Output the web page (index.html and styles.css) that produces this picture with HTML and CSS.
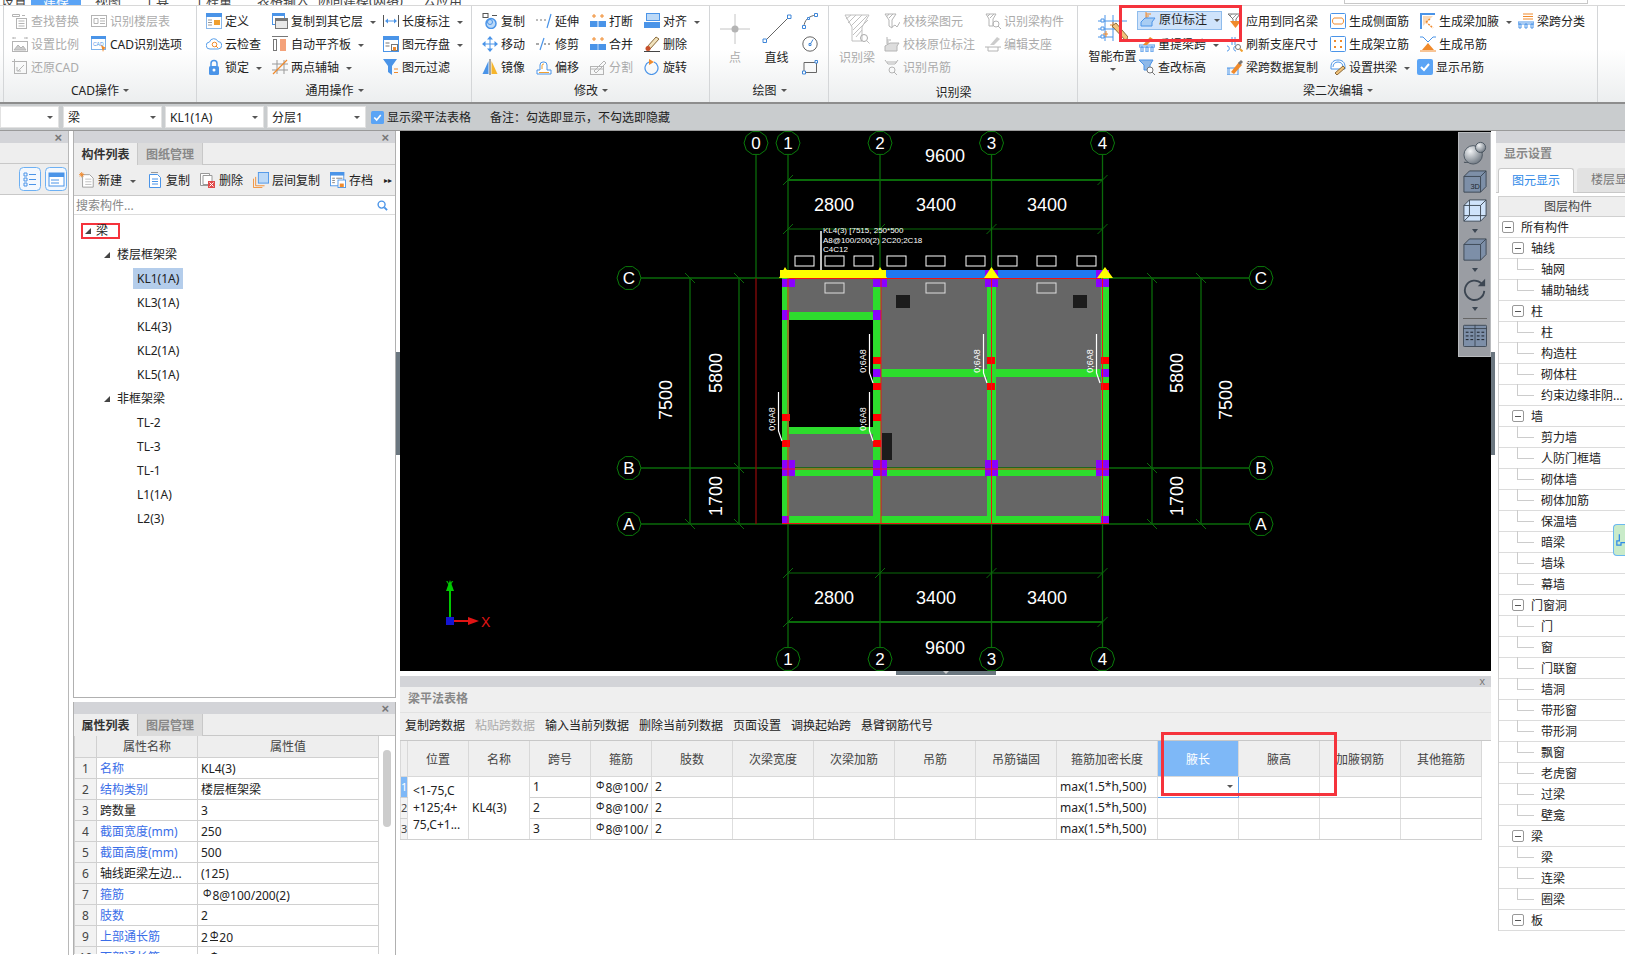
FILE: index.html
```html
<!DOCTYPE html>
<html lang="zh-CN">
<head>
    <meta charset="UTF-8">
    <meta name="viewport" content="width=device-width, initial-scale=1.0">
    <title>梁二次编辑</title>
    <link rel="stylesheet" href="styles.css">
</head>
<body>
    <!-- icon sprite -->
    <svg class="sprite" xmlns="http://www.w3.org/2000/svg">
        <defs>
            <radialGradient id="ball" cx="35%" cy="30%" r="75%"><stop offset="0" stop-color="#f2f4f6"/><stop offset="1" stop-color="#6d7680"/></radialGradient>
        </defs>
        <symbol id="i-find" viewBox="0 0 16 16"><g fill="none" stroke="#b4b4b4"><path d="M.5 1.5h7v2h-7zM10 2.500h3"/><rect x="4.500" y="5.500" width="10" height="10"/><path d="M6.500 8h6M6.500 10.500h6M6.500 13h6"/></g></symbol>
        <symbol id="i-sheet" viewBox="0 0 16 16"><g fill="none" stroke="#b4b4b4"><rect x=".5" y="2.500" width="15" height="11"/><path d="M3 5.500h4v5H3zM9 5.500h5M9 8h5M9 10.500h5"/></g></symbol>
        <symbol id="i-scale" viewBox="0 0 16 16"><g fill="none" stroke="#b4b4b4"><path d="M1 1v2M1 2h3M15 1v2M15 2h-3"/><rect x=".5" y="5.500" width="15" height="10"/><path d="M2 14l4-5 3 3 2-2 3 4z" fill="#ccc"/></g></symbol>
        <symbol id="i-cadopt" viewBox="0 0 16 16"><rect x=".5" y=".5" width="14" height="13" fill="#fff" stroke="#7fb2ea"/><rect x="0" y="0" width="15" height="3" fill="#4a94e8"/><text x="2" y="10" font-size="5" font-family="Liberation Sans" fill="#4a94e8">CAD</text><path d="M10 9l5 3-2 1-1 3z" fill="#f08a2c"/></symbol>
        <symbol id="i-restore" viewBox="0 0 16 16"><g fill="none" stroke="#b4b4b4"><rect x="2.500" y="2.500" width="12" height="12"/><path d="M0 2.500h2M2.500 0v2M12 6L6 12M5 8v4h4"/></g></symbol>
        <symbol id="i-define" viewBox="0 0 16 16"><rect x=".5" y=".5" width="15" height="15" fill="#fff" stroke="#8ab8ea"/><rect width="16" height="4" fill="#4a94e8"/><path d="M2 7h4M2 9.500h4M2 12h4" stroke="#999"/><rect x="8" y="7" width="6" height="5" fill="#f0a030"/></symbol>
        <symbol id="i-copyto" viewBox="0 0 16 16"><rect x=".5" y=".5" width="12" height="11" fill="#fff" stroke="#4a94e8"/><rect width="13" height="3" fill="#4a94e8"/><rect x="3.500" y="5.500" width="12" height="10" fill="#e8e8e8" stroke="#777"/><rect x="3" y="5" width="13" height="3" fill="#777"/></symbol>
        <symbol id="i-len" viewBox="0 0 16 16"><path d="M.5 2v12M15.500 2v12" stroke="#555" fill="none"/><path d="M3 8h10" stroke="#4a94e8" fill="none"/><path d="M2 8l3-2.500v5zM14 8l-3-2.500v5z" fill="#4a94e8"/></symbol>
        <symbol id="i-cloud" viewBox="0 0 16 16"><path d="M4 13a3.500 3.500 0 0 1-.5-7A4.500 4.500 0 0 1 12 5.500a3.700 3.700 0 0 1 0 7.500z" fill="#fff" stroke="#5aa0ea"/><circle cx="8.500" cy="8.500" r="2.300" fill="none" stroke="#f08a2c"/><path d="M10 10l2 2" stroke="#f08a2c"/></symbol>
        <symbol id="i-slab" viewBox="0 0 16 16"><path d="M0 .5h16" stroke="#777"/><rect x="1.500" y="3.500" width="3" height="11" fill="#fff" stroke="#777"/><rect x="8" y="3" width="6" height="12" fill="#f4a27a"/></symbol>
        <symbol id="i-store" viewBox="0 0 16 16"><rect x=".5" y=".5" width="15" height="15" fill="#fff" stroke="#4a94e8"/><rect width="16" height="4" fill="#4a94e8"/><path d="M2.500 7h4M2.500 10h4" stroke="#777"/><rect x="8.500" y="8.500" width="6" height="6" fill="#fff" stroke="#777"/><rect x="10" y="11" width="3" height="3.500" fill="#f08a2c"/></symbol>
        <symbol id="i-lock" viewBox="0 0 16 16"><path d="M5 7V4.500a3 3 0 0 1 6 0V7" fill="none" stroke="#4a94e8" stroke-width="1.500"/><rect x="3" y="7" width="10" height="9" rx="1.500" fill="#4a94e8"/><circle cx="8" cy="11" r="1.500" fill="#fff"/></symbol>
        <symbol id="i-twopt" viewBox="0 0 16 16"><path d="M5 1v14M12 1v14M0 5h16M0 11h16" stroke="#999" fill="none"/><path d="M1 15L15 1" stroke="#f08a2c" fill="none" stroke-width="1.200"/></symbol>
        <symbol id="i-filter" viewBox="0 0 16 16"><path d="M0 0h14l-5 7v9L5 13V7z" fill="#4a94e8"/><path d="M11 10h4M11 13.500h4" stroke="#f08a2c"/></symbol>
        <symbol id="i-copy" viewBox="0 0 16 16"><rect x="1" y=".5" width="5" height="4" fill="none" stroke="#555"/><path d="M10 2.500h5" stroke="#555" fill="none"/><circle cx="9" cy="10.500" r="5" fill="#bcd9f7" stroke="#4a94e8" stroke-width="1.500"/><circle cx="8" cy="9" r="2.500" fill="none" stroke="#4a94e8"/></symbol>
        <symbol id="i-extend" viewBox="0 0 16 16"><path d="M0 7h2M4 7h2M8 7h2" stroke="#777" fill="none"/><path d="M11 15l4-14" stroke="#4a94e8" fill="none" stroke-width="1.200"/></symbol>
        <symbol id="i-break" viewBox="0 0 16 16"><path d="M4 1v4M2 3h4M12 1v4M10 3h4" stroke="#f08a2c" fill="none"/><rect y="8" width="7.500" height="6" fill="#4a94e8"/><rect x="8.500" y="8" width="7.500" height="6" fill="#4a94e8"/></symbol>
        <symbol id="i-alignr" viewBox="0 0 16 16"><rect x="2.500" y=".5" width="13" height="7" fill="#bcd9f7" stroke="#4a94e8"/><rect y="9" width="16" height="6" fill="#4a94e8"/></symbol>
        <symbol id="i-move" viewBox="0 0 16 16"><path d="M8 1v14M1 8h14" stroke="#4a94e8" fill="none"/><path d="M8 0l3 3.500H5zM8 16l3-3.500H5zM0 8l3.500-3v6zM16 8l-3.500-3v6z" fill="#4a94e8"/></symbol>
        <symbol id="i-trim" viewBox="0 0 16 16"><path d="M4 14L8 2" stroke="#4a94e8" fill="none" stroke-width="1.200"/><path d="M0 8h3M8 8h2M12 8h2" stroke="#555" fill="none"/></symbol>
        <symbol id="i-merge" viewBox="0 0 16 16"><path d="M4 1v4M2 3h4M12 1v4M10 3h4" stroke="#f08a2c" fill="none"/><rect y="8" width="16" height="6" fill="#4a94e8"/><path d="M8 8v6" stroke="#bcd9f7"/></symbol>
        <symbol id="i-erase" viewBox="0 0 16 16"><path d="M3 11L12 1l3 2-9 10z" fill="#f1e2bc" stroke="#8a6a3a"/><circle cx="4" cy="12.500" r="2.500" fill="#c8502a"/><path d="M0 15.500h16" stroke="#444"/></symbol>
        <symbol id="i-mirror" viewBox="0 0 16 16"><path d="M6.500 2L.5 15h6z" fill="#4a94e8"/><path d="M9.500 2l6 13h-6z" fill="#f6b52c"/><path d="M8 0v16" stroke="#555"/></symbol>
        <symbol id="i-offset" viewBox="0 0 16 16"><path d="M1 15v-4h3V6a3 3 0 0 1 3-3h1a3 3 0 0 1 3 3v5h4v4z" fill="#fff" stroke="#4a94e8"/><path d="M3 13.500h10M6 10V6a2 2 0 0 1 2-1" stroke="#f0a030" fill="none"/></symbol>
        <symbol id="i-split" viewBox="0 0 16 16"><g fill="none" stroke="#b4b4b4"><rect x=".5" y="7.500" width="13" height="8"/><path d="M4 12L14 2l2 2L6 14zM0 10h14"/></g></symbol>
        <symbol id="i-rotate" viewBox="0 0 16 16"><path d="M10 3a6.500 6.500 0 1 1-5 0" fill="none" stroke="#4a94e8" stroke-width="1.200"/><path d="M5 0l5 3-5 3z" fill="#f08a2c"/></symbol>
        <symbol id="i-arc" viewBox="0 0 16 16"><path d="M2 14C2 7 7 3 14 2" fill="none" stroke="#666"/><path d="M.5 12.500h3v3h-3zM12.500.5h3v3h-3zM5.500 4.500h2v2h-2z" fill="#fff" stroke="#3f86d8"/></symbol>
        <symbol id="i-circle" viewBox="0 0 16 16"><circle cx="8" cy="8" r="7.200" fill="none" stroke="#666"/><path d="M7 7.500h2v2H7zM11 3.500L9 7" fill="#fff" stroke="#3f86d8"/></symbol>
        <symbol id="i-rect" viewBox="0 0 16 16"><path d="M2 3.500h12.500V13.500H2z" fill="none" stroke="#666"/><path d="M.5 12h3v3h-3zM13 1.500h2.500v2.500H13z" fill="#fff" stroke="#3f86d8"/></symbol>
        <symbol id="i-bigfunnel" viewBox="0 0 30 30"><g fill="none" stroke="#c0c0c0"><path d="M3 1h24l-7 12v14H10V13z"/><path d="M4 5L9 1M6 9L14 1M9 12L20 1M11 16L25 2M11 21L26 6M14 23L20 16"/><circle cx="22" cy="24" r="3.500" stroke="#aaa"/><path d="M24.500 26.500l3 3"/></g></symbol>
        <symbol id="i-chkbeam" viewBox="0 0 16 16"><g fill="none" stroke="#b4b4b4"><path d="M1 1h11L8 7v8L5 13V7zM3 3.500L5 1M5 5L9 1"/><path d="M8 14l3-2 2 2 3-5"/></g></symbol>
        <symbol id="i-chkpos" viewBox="0 0 16 16"><g fill="none" stroke="#b4b4b4"><path d="M3 1v7h6M3 4h4M3 6h2"/></g><path d="M1 10l5-3h9l-2 3v5H1z" fill="#ddd" stroke="#b4b4b4"/></symbol>
        <symbol id="i-hang" viewBox="0 0 16 16"><g fill="none" stroke="#b4b4b4"><path d="M1 1l3 4h7l3-4M3 3h10"/><circle cx="8" cy="11" r="3"/><path d="M10 13l3 3"/></g></symbol>
        <symbol id="i-comp" viewBox="0 0 16 16"><g fill="none" stroke="#b4b4b4"><path d="M1 1h10L8 6v7H4V6zM3 3l2-2M5 5l4-4"/><circle cx="11" cy="11" r="3"/><path d="M13 13l3 3"/></g></symbol>
        <symbol id="i-editsup" viewBox="0 0 16 16"><g fill="none" stroke="#b4b4b4"><path d="M0 11h16M3 11v4M13 11v4M3 15h10"/></g><path d="M5 9L12 1l3 2-6 6z" fill="#ccc"/></symbol>
        <symbol id="i-smart" viewBox="0 0 30 30"><g fill="none" stroke="#4a94e8"><path d="M7 1v26M15 1v26M23 1v26M0 7h29M0 15h18M0 23h15"/></g><path d="M3 5h3v3H3zM3 13h3v3H3zM3 21h3v3H3z" fill="#fff" stroke="#4a94e8"/><path d="M12 11h6M15 8v6M5 20h5M8 17v6" stroke="#f08a2c"/><path d="M14 12l4-3 12 14-2 4z" fill="#f1c27a" stroke="#8a6a3a"/></symbol>
        <symbol id="i-origin" viewBox="0 0 16 16"><path d="M6 1v8M6 3h5M6 5h3M6 7h2" stroke="#f08a2c" fill="none"/><path d="M1 11l4-4h10l-3 4v4H1z" fill="#a9cdf3" stroke="#4a94e8"/></symbol>
        <symbol id="i-respan" viewBox="0 0 16 16"><path d="M0 9h16v2H0zM2 11h2v5H2zM7 11h2v5H7zM12 11h2v5h-2z" fill="none" stroke="#4a94e8"/><path d="M4 9l7-8 3 2-6 6z" fill="#f08a2c"/></symbol>
        <symbol id="i-elev" viewBox="0 0 16 16"><path d="M0 1h14l-3 5v5H5V6z" fill="#8fb9e8" stroke="#4a94e8"/><circle cx="11" cy="11" r="3" fill="#fff" stroke="#777"/><path d="M13 13l3 3" stroke="#777"/></symbol>
        <symbol id="i-apply" viewBox="0 0 16 16"><path d="M1 1h12L9 6v3H6V6z" fill="#fff" stroke="#777"/><path d="M3 3l2-2M6 5l4-4" stroke="#999"/><path d="M3 8h11l-5.500 7z" fill="#f08a2c"/></symbol>
        <symbol id="i-refresh" viewBox="0 0 16 16"><path d="M0 15c3 0 3-5 0-5M9 15c-3 0-3-5 0-5M5 1v8M8 1v8" fill="none" stroke="#4a94e8"/><circle cx="11" cy="11" r="2.500" fill="#fff" stroke="#777"/><path d="M13 13l2.500 2.500" stroke="#f0a030" stroke-width="2"/></symbol>
        <symbol id="i-spandata" viewBox="0 0 16 16"><path d="M0 9h11v7H0z" fill="none" stroke="#4a94e8"/><path d="M4 13L12 3l3 3-8 9z" fill="#f08a2c"/><path d="M11 4l3-3 2 2-3 3z" fill="#777"/><path d="M2 9v7" stroke="#4a94e8"/></symbol>
        <symbol id="i-side" viewBox="0 0 16 16"><rect x=".5" y=".5" width="15" height="15" rx="1" fill="#fff" stroke="#4a94e8"/><path d="M4 5h8M4 11h8" stroke="#f08a2c"/><path d="M4 5c-2 1-2 5 0 6M12 5c2 1 2 5 0 6" fill="none" stroke="#f08a2c"/></symbol>
        <symbol id="i-stand" viewBox="0 0 16 16"><rect x=".5" y=".5" width="15" height="15" rx="1" fill="#fff" stroke="#4a94e8"/><path d="M4 4h2v2H4zM10 4h2v2h-2zM4 10h2v2H4zM10 10h2v2h-2z" fill="#f08a2c"/></symbol>
        <symbol id="i-arch" viewBox="0 0 16 16"><path d="M1 8C1 3 4 1 8 1s7 2 7 7v2H1z" fill="#fff" stroke="#4a94e8"/><path d="M3 8c0-3 2-5 5-5s5 2 5 5" fill="none" stroke="#4a94e8"/><path d="M5 14l8-7 2 2-8 7z" fill="#f1c27a" stroke="#8a6a3a"/></symbol>
        <symbol id="i-haunch" viewBox="0 0 16 16"><path d="M1 0v16M1 1h14" stroke="#4a94e8" stroke-width="2" fill="none"/><path d="M3 3h10L3 13z" fill="#f8d9b8"/><path d="M6 9l7 6M6 9l4-3" stroke="#f08a2c" stroke-width="1.500" fill="none" stroke-dasharray="2 1"/></symbol>
        <symbol id="i-hangbar" viewBox="0 0 16 16"><path d="M0 1h3l5 5 5-5h3" stroke="#4a94e8" fill="none"/><path d="M8 7l6 7H2z" fill="#f08a2c"/><path d="M0 15h16" stroke="#f08a2c"/></symbol>
        <symbol id="i-spans" viewBox="0 0 16 16"><path d="M5 1h10M5 3.500h10M5 6h10" stroke="#f08a2c"/><path d="M0 9h16v2H0zM1 11h2v4H1zM7 11h2v4H7zM13 11h2v4h-2z" fill="none" stroke="#4a94e8"/></symbol>
        <symbol id="i-check" viewBox="0 0 16 16"><rect width="16" height="16" rx="2" fill="#5ba4f5"/><path d="M4 8l3 3 5-6" fill="none" stroke="#fff" stroke-width="2"/></symbol>
        <symbol id="i-new" viewBox="0 0 18 18"><path d="M4 3h8l4 4v10H4z" fill="#fff" stroke="#999"/><path d="M7 8h7M7 11h7M7 14h7" stroke="#bbb"/><path d="M1 1l4 4M5 1L1 5M3 0v6M0 3h6" stroke="#f08a2c"/></symbol>
        <symbol id="i-doc" viewBox="0 0 16 16"><path d="M2.500 2.500h8l3 3v10h-11z" fill="#fff" stroke="#4a94e8"/><path d="M5 7h6M5 9.500h6M5 12h6" stroke="#4a94e8"/><path d="M4 .5h7" stroke="#999"/></symbol>
        <symbol id="i-del" viewBox="0 0 16 16"><path d="M.5 1.500h9v12h-9z" fill="#fff" stroke="#999"/><path d="M3 3.500h9v9H3z" fill="#fff" stroke="#999"/><rect x="8" y="9" width="7" height="7" fill="#e04a4a"/><path d="M9.500 10.500l4 4M13.500 10.500l-4 4" stroke="#fff"/></symbol>
        <symbol id="i-floor" viewBox="0 0 18 18"><path d="M.5 7.500v10h10M3 5.500v10h10" fill="none" stroke="#f08a2c"/><rect x="6" y=".5" width="11.500" height="12" fill="#bcd9f7" stroke="#4a94e8"/></symbol>
        <symbol id="i-archive" viewBox="0 0 18 18"><rect x=".5" y=".5" width="15" height="15" fill="#fff" stroke="#4a94e8"/><rect width="16" height="4" fill="#4a94e8"/><path d="M2.500 7h3M2.500 9.500h3M2.500 12h3M7 7h7" stroke="#777"/><rect x="9" y="9" width="8.500" height="8.500" fill="#fff" stroke="#4a94e8"/><rect x="11" y="13" width="4.500" height="4" fill="#f08a2c"/></symbol>
        <symbol id="i-listv" viewBox="0 0 22 24"><rect x=".5" y=".5" width="21" height="23" rx="4" fill="#f3f8fe" stroke="#6db0f3"/><path d="M5 6h3v3H5zM5 11h3v3H5zM5 16h3v3H5z" fill="none" stroke="#4a94e8"/><path d="M10 7.500h7M10 12.500h7M10 17.500h7" stroke="#4a94e8"/></symbol>
        <symbol id="i-cardv" viewBox="0 0 22 24"><rect x=".5" y=".5" width="21" height="23" rx="4" fill="#f3f8fe" stroke="#6db0f3"/><rect x="4" y="6" width="15" height="13" fill="#fff" stroke="#4a94e8"/><rect x="4" y="6" width="15" height="4" fill="#4a94e8"/><path d="M6 13h8M6 16h8" stroke="#4a94e8"/></symbol>
        <symbol id="i-search" viewBox="0 0 12 12"><circle cx="5" cy="5" r="3.800" fill="none" stroke="#4a94e8" stroke-width="1.500"/><path d="M8 8l3 3" stroke="#4a94e8" stroke-width="2"/></symbol>
        <symbol id="i-sphere" viewBox="0 0 26 26"><path d="M1 23c7 2 18-6 22-14" fill="none" stroke="#3c4652"/><circle cx="11" cy="15" r="10" fill="url(#ball)" stroke="#4a5560"/><circle cx="19" cy="7" r="5.500" fill="url(#ball)" stroke="#4a5560"/></symbol>
        <symbol id="i-3d" viewBox="0 0 26 26"><path d="M1 7l6-6h18v17l-6 6H1z" fill="#7d8fa8" stroke="#3c4652"/><path d="M1 7h18v17M19 7l6-6" fill="none" stroke="#3c4652"/><text x="8" y="21" font-size="8" font-family="Liberation Sans" fill="#1e2630">3D</text></symbol>
        <symbol id="i-box" viewBox="0 0 26 26"><path d="M1 7l6-6h18v17l-6 6H1z" fill="#cfe3fb" stroke="#3c4652"/><path d="M1 7h18v17M19 7l6-6M7 1v17H1M7 18h18M7 18l-6 6" fill="none" stroke="#3c4652"/></symbol>
        <symbol id="i-cube" viewBox="0 0 26 26"><path d="M1 7l6-6h18v17l-6 6H1z" fill="#7d8fa8" stroke="#3c4652"/><path d="M1 7h18v17M19 7l6-6" fill="none" stroke="#3c4652"/></symbol>
        <symbol id="i-turn" viewBox="0 0 26 26"><path d="M20 7a10.500 10.500 0 1 0 3 8" fill="none" stroke="#3c4652" stroke-width="2"/><path d="M24 2v8h-8z" fill="#3c4652"/></symbol>
        <symbol id="i-grid" viewBox="0 0 26 26"><rect x=".5" y="2.500" width="25" height="23" rx="1" fill="#7d8fa8" stroke="#3c4652"/><path d="M13 2v23M0 6h26" stroke="#3c4652"/><path d="M3 10h3M8 10h3M3 14h3M8 14h3M3 18h3M8 18h3M15 10h3M20 10h3M15 14h3M20 14h3M15 18h3M20 18h3" stroke="#14181e"/></symbol>
    </svg>

    <!-- menu tabs, only their lower edge is on screen -->
    <div class="menu-tabs">
        <span class="menu-tab tab-a">设置</span>
        <span class="menu-tab tab-b is-active">建模</span>
        <span class="menu-tab tab-c">视图</span>
        <span class="menu-tab tab-d">工具</span>
        <span class="menu-tab tab-e">工程量</span>
        <span class="menu-tab tab-f">表格输入</span>
        <span class="menu-tab tab-g">协同建模(网络)</span>
        <span class="menu-tab tab-h">云应用</span>
        <div class="menu-search"></div>
    </div>

    <div class="ribbon">
        <section class="group g-cad">
            <div class="group-body">
                <div class="item off"><svg><use href="#i-find"/></svg>查找替换</div>
                <div class="item off"><svg><use href="#i-scale"/></svg>设置比例</div>
                <div class="item off"><svg><use href="#i-restore"/></svg>还原CAD</div>
                <div class="item off"><svg><use href="#i-sheet"/></svg>识别楼层表</div>
                <div class="item"><svg><use href="#i-cadopt"/></svg>CAD识别选项</div>
            </div>
            <div class="group-label">CAD操作<i class="caret"></i></div>
        </section>
        <section class="group g-common">
            <div class="group-body">
                <div class="item"><svg><use href="#i-define"/></svg>定义</div>
                <div class="item"><svg><use href="#i-cloud"/></svg>云检查</div>
                <div class="item"><svg><use href="#i-lock"/></svg>锁定<i class="caret"></i></div>
                <div class="item"><svg><use href="#i-copyto"/></svg>复制到其它层<i class="caret"></i></div>
                <div class="item"><svg><use href="#i-slab"/></svg>自动平齐板<i class="caret"></i></div>
                <div class="item"><svg><use href="#i-twopt"/></svg>两点辅轴<i class="caret"></i></div>
                <div class="item"><svg><use href="#i-len"/></svg>长度标注<i class="caret"></i></div>
                <div class="item"><svg><use href="#i-store"/></svg>图元存盘<i class="caret"></i></div>
                <div class="item"><svg><use href="#i-filter"/></svg>图元过滤</div>
            </div>
            <div class="group-label">通用操作<i class="caret"></i></div>
        </section>
        <section class="group g-modify">
            <div class="group-body">
                <div class="item"><svg><use href="#i-copy"/></svg>复制</div>
                <div class="item"><svg><use href="#i-move"/></svg>移动</div>
                <div class="item"><svg><use href="#i-mirror"/></svg>镜像</div>
                <div class="item"><svg><use href="#i-extend"/></svg>延伸</div>
                <div class="item"><svg><use href="#i-trim"/></svg>修剪</div>
                <div class="item"><svg><use href="#i-offset"/></svg>偏移</div>
                <div class="item"><svg><use href="#i-break"/></svg>打断</div>
                <div class="item"><svg><use href="#i-merge"/></svg>合并</div>
                <div class="item off"><svg><use href="#i-split"/></svg>分割</div>
                <div class="item"><svg><use href="#i-alignr"/></svg>对齐<i class="caret"></i></div>
                <div class="item"><svg><use href="#i-erase"/></svg>删除</div>
                <div class="item"><svg><use href="#i-rotate"/></svg>旋转</div>
            </div>
            <div class="group-label">修改<i class="caret"></i></div>
        </section>
        <section class="group g-draw">
            <div class="group-body">
                <div class="big off">
                    <svg class="draw-icon" viewBox="0 0 30 30"><path d="M15 0v30M0 15h30" stroke="#c4c4c4" fill="none"/><circle cx="15" cy="15" r="3.500" fill="#b4b4b4"/></svg>
                    点
                </div>
                <div class="big">
                    <svg class="draw-icon" viewBox="0 0 30 30"><path d="M3 27L27 3" stroke="#666" fill="none"/><path d="M1 25h3.500v3.500H1zM25.500 1H29v3.500h-3.500z" fill="#fff" stroke="#3f86d8"/></svg>
                    直线
                </div>
                <div class="item icon-only"><svg><use href="#i-arc"/></svg></div>
                <div class="item icon-only"><svg><use href="#i-circle"/></svg></div>
                <div class="item icon-only"><svg><use href="#i-rect"/></svg></div>
            </div>
            <div class="group-label">绘图<i class="caret"></i></div>
        </section>
        <section class="group g-identify">
            <div class="group-body">
                <div class="big off">
                    <svg class="draw-icon" viewBox="0 0 30 30"><use href="#i-bigfunnel"/></svg>
                    识别梁
                </div>
                <div class="item off"><svg><use href="#i-chkbeam"/></svg>校核梁图元</div>
                <div class="item off"><svg><use href="#i-chkpos"/></svg>校核原位标注</div>
                <div class="item off"><svg><use href="#i-hang"/></svg>识别吊筋</div>
                <div class="item off"><svg><use href="#i-comp"/></svg>识别梁构件</div>
                <div class="item off"><svg><use href="#i-editsup"/></svg>编辑支座</div>
            </div>
            <div class="group-label">识别梁</div>
        </section>
        <section class="group g-beam">
            <div class="group-body">
                <div class="big smart">
                    <svg class="draw-icon" viewBox="0 0 30 30"><use href="#i-smart"/></svg>
                    智能布置
                    <i class="caret"></i>
                </div>
                <div class="item is-on"><svg><use href="#i-origin"/></svg>原位标注<i class="caret"></i></div>
                <div class="item"><svg><use href="#i-respan"/></svg>重提梁跨<i class="caret"></i></div>
                <div class="item"><svg><use href="#i-elev"/></svg>查改标高</div>
                <div class="item"><svg><use href="#i-apply"/></svg>应用到同名梁</div>
                <div class="item"><svg><use href="#i-refresh"/></svg>刷新支座尺寸</div>
                <div class="item"><svg><use href="#i-spandata"/></svg>梁跨数据复制</div>
                <div class="item"><svg><use href="#i-side"/></svg>生成侧面筋</div>
                <div class="item"><svg><use href="#i-stand"/></svg>生成架立筋</div>
                <div class="item"><svg><use href="#i-arch"/></svg>设置拱梁<i class="caret"></i></div>
                <div class="item"><svg><use href="#i-haunch"/></svg>生成梁加腋<i class="caret"></i></div>
                <div class="item"><svg><use href="#i-hangbar"/></svg>生成吊筋</div>
                <div class="item item-check"><svg><use href="#i-check"/></svg>显示吊筋</div>
                <div class="item"><svg><use href="#i-spans"/></svg>梁跨分类</div>
            </div>
            <div class="group-label">梁二次编辑<i class="caret"></i></div>
        </section>
        <div class="mark mark-ribbon"></div>
    </div>

    <div class="selector-bar">
        <div class="select sel-first"><i class="caret"></i></div>
        <div class="select">梁<i class="caret"></i></div>
        <div class="select">KL1(1A)<i class="caret"></i></div>
        <div class="select">分层1<i class="caret"></i></div>
        <label class="check-label"><svg class="check-box"><use href="#i-check"/></svg>显示梁平法表格</label>
        <span class="note">备注：勾选即显示，不勾选即隐藏</span>
    </div>

    <div class="main">
        <aside class="rail">
            <div class="panel-head"><span class="close">×</span></div>
            <div class="rail-tabs"></div>
            <div class="rail-tools">
                <svg class="view-btn"><use href="#i-listv"/></svg>
                <svg class="view-btn"><use href="#i-cardv"/></svg>
            </div>
        </aside>

        <div class="left-col">
            <section class="panel list-panel">
                <div class="panel-head"><span class="close">×</span></div>
                <div class="tabs">
                    <span class="tab is-active">构件列表</span>
                    <span class="tab">图纸管理</span>
                </div>
                <div class="list-tools">
                    <span class="tool"><svg><use href="#i-new"/></svg>新建<i class="caret"></i></span>
                    <span class="tool"><svg><use href="#i-doc"/></svg>复制</span>
                    <span class="tool"><svg><use href="#i-del"/></svg>删除</span>
                    <span class="tool"><svg><use href="#i-floor"/></svg>层间复制</span>
                    <span class="tool"><svg><use href="#i-archive"/></svg>存档</span>
                    <span class="more">▸▸</span>
                </div>
                <div class="search">
                    <span>搜索构件...</span>
                    <svg class="search-icon"><use href="#i-search"/></svg>
                </div>
                <ul class="tree">
                    <li class="node lv0"><span class="root-mark"><i class="tri"></i>梁</span></li>
                    <li class="node lv1"><i class="tri"></i>楼层框架梁</li>
                    <li class="node lv2"><span class="leaf is-selected">KL1(1A)</span></li>
                    <li class="node lv2"><span class="leaf">KL3(1A)</span></li>
                    <li class="node lv2"><span class="leaf">KL4(3)</span></li>
                    <li class="node lv2"><span class="leaf">KL2(1A)</span></li>
                    <li class="node lv2"><span class="leaf">KL5(1A)</span></li>
                    <li class="node lv1"><i class="tri"></i>非框架梁</li>
                    <li class="node lv2"><span class="leaf">TL-2</span></li>
                    <li class="node lv2"><span class="leaf">TL-3</span></li>
                    <li class="node lv2"><span class="leaf">TL-1</span></li>
                    <li class="node lv2"><span class="leaf">L1(1A)</span></li>
                    <li class="node lv2"><span class="leaf">L2(3)</span></li>
                </ul>
            </section>

            <section class="panel prop-panel">
                <div class="panel-head"><span class="close">×</span></div>
                <div class="tabs">
                    <span class="tab is-active">属性列表</span>
                    <span class="tab">图层管理</span>
                </div>
                <div class="prop-body">
                    <table class="prop-table">
                        <thead>
                            <tr><th class="p-idx"></th><th class="p-name">属性名称</th><th>属性值</th></tr>
                        </thead>
                        <tbody>
                            <tr><td class="idx">1</td><td class="link">名称</td><td>KL4(3)</td></tr>
                            <tr><td class="idx">2</td><td class="link">结构类别</td><td>楼层框架梁</td></tr>
                            <tr><td class="idx">3</td><td>跨数量</td><td>3</td></tr>
                            <tr><td class="idx">4</td><td class="link">截面宽度(mm)</td><td>250</td></tr>
                            <tr><td class="idx">5</td><td class="link">截面高度(mm)</td><td>500</td></tr>
                            <tr><td class="idx">6</td><td>轴线距梁左边...</td><td>(125)</td></tr>
                            <tr><td class="idx">7</td><td class="link">箍筋</td><td><sup class="bar">Φ</sup>8@100/200(2)</td></tr>
                            <tr><td class="idx">8</td><td class="link">肢数</td><td>2</td></tr>
                            <tr><td class="idx">9</td><td class="link">上部通长筋</td><td>2<sup class="bar bar-c">Φ</sup>20</td></tr>
                            <tr><td class="idx">10</td><td class="link">下部通长筋</td><td>2<sup class="bar bar-c">Φ</sup>18</td></tr>
                        </tbody>
                    </table>
                    <div class="prop-scroll"><div class="prop-thumb"></div></div>
                </div>
            </section>
        </div>

        <div class="splitter"><div class="grip"></div></div>

        <div class="center-col">
            <div class="canvas">
                <svg class="drawing" viewBox="400 131 1091 540" xmlns="http://www.w3.org/2000/svg">
                    <defs>
                        <polygon id="bubble" points="12,0 9.700,7.050 3.700,11.400 -3.700,11.400 -9.700,7.050 -12,0 -9.700,-7.050 -3.700,-11.400 3.700,-11.400 9.700,-7.050" fill="#000" stroke="#0a7a0a"/>
                        <path id="tick" d="M-5 5L5 -5" stroke="#0a6a0a" fill="none"/>
                        <path id="vtick" d="M-5 -5L5 5" stroke="#0a6a0a" fill="none"/>
                        <rect id="box-top" width="19" height="10" fill="none" stroke="#fff"/>
                        <rect id="box-low" width="19" height="10" fill="none" stroke="#ddd"/>
                        <rect id="pillar" width="8" height="7" fill="#ff0000"/>
                        <g id="tag">
                            <path d="M-3.500 -49V-10L0 0" stroke="#fff" fill="none" stroke-width="1.200"/>
                            <text transform="translate(-7 -22) rotate(-90)" class="tag-text" text-anchor="middle">0;6A8</text>
                        </g>
                    </defs>

                    <!-- slab -->
                    <rect x="782" y="278" width="327" height="246" fill="#666"/>
                    <rect x="789" y="320" width="84" height="107" fill="#000"/>
                    <rect x="896" y="295" width="14" height="13" fill="#1c1c1c"/>
                    <rect x="1073" y="295" width="14" height="13" fill="#1c1c1c"/>
                    <rect x="882" y="433" width="10" height="27" fill="#1c1c1c"/>

                    <!-- axis lines -->
                    <g stroke="#0a6a0a" fill="none" stroke-width="1.300">
                        <path d="M641 278H1249M641 468H1249M641 524H1249"/>
                        <path d="M690 278V524M739 278V524M1152 278V524M1201 278V524"/>
                        <path d="M756 155V278M788 155V647M880 155V647M991.500 155V647M1102.500 155V647"/>
                        <path d="M788 229H1102.500M788 573H1102.500" stroke-width="1.200"/>
                        <path d="M788 180H1102.500" stroke-width="2"/>
                        <path d="M788 622H1102.500" stroke-width="2"/>
                    </g>
                    <path d="M756 278V524" stroke="#8a0a0a" stroke-width="1.300"/>
                    <g>
                        <use href="#tick" x="788" y="180"/><use href="#tick" x="1102.500" y="180"/>
                        <use href="#tick" x="788" y="229"/><use href="#tick" x="880" y="229"/><use href="#tick" x="991.500" y="229"/><use href="#tick" x="1102.500" y="229"/>
                        <use href="#tick" x="788" y="573"/><use href="#tick" x="880" y="573"/><use href="#tick" x="991.500" y="573"/><use href="#tick" x="1102.500" y="573"/>
                        <use href="#tick" x="788" y="622"/><use href="#tick" x="1102.500" y="622"/>
                        <use href="#vtick" x="690" y="278"/><use href="#vtick" x="739" y="278"/><use href="#vtick" x="739" y="468"/><use href="#vtick" x="690" y="524"/><use href="#vtick" x="739" y="524"/>
                        <use href="#vtick" x="1152" y="278"/><use href="#vtick" x="1201" y="278"/><use href="#vtick" x="1152" y="468"/><use href="#vtick" x="1152" y="524"/><use href="#vtick" x="1201" y="524"/>
                    </g>

                    <!-- beams -->
                    <g fill="#2ddc2d">
                        <rect x="782" y="278" width="7" height="246"/>
                        <rect x="873" y="278" width="8" height="246"/>
                        <rect x="987" y="278" width="9" height="246"/>
                        <rect x="1101" y="278" width="8" height="246"/>
                        <rect x="789" y="312" width="84" height="8"/>
                        <rect x="789" y="427" width="84" height="7"/>
                        <rect x="881" y="369" width="220" height="8"/>
                        <rect x="782" y="468" width="327" height="8"/>
                        <rect x="782" y="516" width="327" height="8"/>
                    </g>
                    <rect x="886" y="270" width="214" height="8" fill="#1e78f0"/>
                    <rect x="780" y="270" width="106" height="8" fill="#ffff00"/>

                    <!-- columns -->
                    <g fill="#8a00ff">
                        <rect x="1096" y="270" width="13" height="8"/><rect x="985" y="270" width="13" height="8"/>
                        <rect x="782" y="279" width="13" height="8"/><rect x="873" y="279" width="14" height="8"/><rect x="985" y="279" width="13" height="8"/><rect x="1096" y="279" width="13" height="8"/>
                        <rect x="782" y="310" width="7" height="10"/><rect x="873" y="310" width="8" height="10"/>
                        <rect x="873" y="369" width="8" height="8"/><rect x="1101" y="369" width="8" height="8"/>
                        <rect x="782" y="460" width="13" height="16"/><rect x="873" y="460" width="14" height="16"/><rect x="985" y="460" width="13" height="16"/><rect x="1096" y="460" width="13" height="16"/>
                        <rect x="782" y="516" width="7" height="7"/><rect x="1101" y="516" width="8" height="7"/>
                    </g>
                    <use href="#pillar" x="873" y="357"/><use href="#pillar" x="987" y="357"/><use href="#pillar" x="1101" y="357"/>
                    <use href="#pillar" x="873" y="383"/><use href="#pillar" x="987" y="383"/><use href="#pillar" x="1101" y="383"/>
                    <use href="#pillar" x="782" y="414"/><use href="#pillar" x="873" y="414"/>
                    <use href="#pillar" x="782" y="440"/><use href="#pillar" x="873" y="440"/>

                    <!-- red centre lines -->
                    <g stroke="#f01414" fill="none">
                        <path d="M788 278V524M881 278V524M991.500 278V524M1102.500 278V524"/>
                        <path d="M782 469H1109M782 523.500H1109"/>
                        <path d="M789 278.500H1100"/>
                    </g>

                    <!-- supports -->
                    <g fill="#ffff00">
                        <path d="M785 267L779 278H792z"/>
                        <path d="M880 267L874 278H887z"/>
                        <path d="M991.500 267L984 278H999z"/>
                        <path d="M1105 267L1097 278H1113z"/>
                    </g>

                    <!-- span marks -->
                    <use href="#box-top" x="795" y="256"/><use href="#box-top" x="825" y="256"/><use href="#box-top" x="854" y="256"/>
                    <use href="#box-top" x="887" y="256"/><use href="#box-top" x="926" y="256"/><use href="#box-top" x="966" y="256"/>
                    <use href="#box-top" x="998" y="256"/><use href="#box-top" x="1037" y="256"/><use href="#box-top" x="1077" y="256"/>
                    <use href="#box-low" x="825" y="283"/><use href="#box-low" x="926" y="283"/><use href="#box-low" x="1037" y="283"/>

                    <path d="M821 231V270" stroke="#fff" stroke-width="1.500"/>
                    <text class="note-text" x="823" y="233">KL4(3) [7515, 250*500</text>
                    <text class="note-text" x="823" y="243">A8@100/200(2) 2C20;2C18</text>
                    <text class="note-text" x="823" y="252">C4C12</text>

                    <use href="#tag" x="873" y="383"/>
                    <use href="#tag" x="987" y="383"/>
                    <use href="#tag" x="1100" y="383"/>
                    <use href="#tag" x="782" y="441"/>
                    <use href="#tag" x="873" y="441"/>

                    <!-- axis bubbles -->
                    <use href="#bubble" x="756" y="143"/><use href="#bubble" x="788" y="143"/><use href="#bubble" x="880" y="143"/><use href="#bubble" x="991.500" y="143"/><use href="#bubble" x="1102.500" y="143"/>
                    <use href="#bubble" x="788" y="659"/><use href="#bubble" x="880" y="659"/><use href="#bubble" x="991.500" y="659"/><use href="#bubble" x="1102.500" y="659"/>
                    <use href="#bubble" x="629" y="278"/><use href="#bubble" x="629" y="468"/><use href="#bubble" x="629" y="524"/>
                    <use href="#bubble" x="1261" y="278"/><use href="#bubble" x="1261" y="468"/><use href="#bubble" x="1261" y="524"/>
                    <g class="bubble-text" text-anchor="middle">
                        <text x="756" y="149">0</text><text x="788" y="149">1</text><text x="880" y="149">2</text><text x="991.500" y="149">3</text><text x="1102.500" y="149">4</text>
                        <text x="788" y="665">1</text><text x="880" y="665">2</text><text x="991.500" y="665">3</text><text x="1102.500" y="665">4</text>
                        <text x="629" y="284">C</text><text x="629" y="474">B</text><text x="629" y="530">A</text>
                        <text x="1261" y="284">C</text><text x="1261" y="474">B</text><text x="1261" y="530">A</text>
                    </g>

                    <!-- dimensions -->
                    <g class="dim-text" text-anchor="middle">
                        <text x="945" y="162">9600</text>
                        <text x="834" y="211">2800</text><text x="936" y="211">3400</text><text x="1047" y="211">3400</text>
                        <text x="834" y="604">2800</text><text x="936" y="604">3400</text><text x="1047" y="604">3400</text>
                        <text x="945" y="654">9600</text>
                        <text transform="translate(672 400) rotate(-90)">7500</text>
                        <text transform="translate(722 373) rotate(-90)">5800</text>
                        <text transform="translate(722 496) rotate(-90)">1700</text>
                        <text transform="translate(1183 373) rotate(-90)">5800</text>
                        <text transform="translate(1232 400) rotate(-90)">7500</text>
                        <text transform="translate(1183 496) rotate(-90)">1700</text>
                    </g>

                    <!-- coordinate system -->
                    <path d="M450 621V590" stroke="#00c800" stroke-width="2"/>
                    <path d="M450 580l-4 11h8z" fill="#00c800"/>
                    <path d="M450 621H470" stroke="#e01414" stroke-width="2"/>
                    <path d="M479 621l-11-4v8z" fill="#e01414"/>
                    <rect x="446" y="617" width="8" height="8" fill="#1414d2"/>
                    <text class="axis-y" x="446" y="589">Y</text>
                    <text class="axis-x" x="481" y="627">X</text>
                </svg>

                <div class="view-tools">
                    <svg class="view-icon"><use href="#i-sphere"/></svg>
                    <svg class="view-icon"><use href="#i-3d"/></svg>
                    <svg class="view-icon"><use href="#i-box"/></svg>
                    <i class="caret"></i>
                    <svg class="view-icon"><use href="#i-cube"/></svg>
                    <i class="caret"></i>
                    <svg class="view-icon"><use href="#i-turn"/></svg>
                    <i class="caret"></i>
                    <hr class="view-sep">
                    <svg class="view-icon"><use href="#i-grid"/></svg>
                </div>
            </div>

            <div class="h-splitter"><div class="h-grip"><i class="caret"></i></div></div>

            <section class="table-panel">
                <div class="panel-head"><span class="close close-x">x</span></div>
                <div class="table-title">梁平法表格</div>
                <div class="table-tools">
                    <span>复制跨数据</span>
                    <span class="off-text">粘贴跨数据</span>
                    <span>输入当前列数据</span>
                    <span>删除当前列数据</span>
                    <span>页面设置</span>
                    <span>调换起始跨</span>
                    <span>悬臂钢筋代号</span>
                </div>
                <table class="span-table">
                    <colgroup>
                        <col class="c-row"><col class="c-sm"><col class="c-sm"><col class="c-sm"><col class="c-sm">
                        <col class="c-md"><col class="c-md"><col class="c-md"><col class="c-md"><col class="c-md">
                        <col class="c-lg">
                        <col class="c-md"><col class="c-md"><col class="c-md"><col class="c-md">
                    </colgroup>
                    <thead>
                        <tr>
                            <th></th><th>位置</th><th>名称</th><th>跨号</th><th>箍筋</th><th>肢数</th>
                            <th>次梁宽度</th><th>次梁加筋</th><th>吊筋</th><th>吊筋锚固</th><th>箍筋加密长度</th>
                            <th class="is-picked">腋长</th><th>腋高</th><th>加腋钢筋</th><th>其他箍筋</th>
                        </tr>
                    </thead>
                    <tbody>
                        <tr>
                            <td class="row-no is-current">1</td>
                            <td rowspan="3" class="pos-cell">&lt;1-75,C<br>+125;4+<br>75,C+1...</td>
                            <td rowspan="3" class="name-cell">KL4(3)</td>
                            <td>1</td><td><sup class="bar">Φ</sup>8@100/</td><td>2</td><td></td><td></td><td></td><td></td><td>max(1.5*h,500)</td>
                            <td class="cell-edit"><i class="caret"></i></td><td></td><td></td><td></td>
                        </tr>
                        <tr>
                            <td class="row-no">2</td>
                            <td>2</td><td><sup class="bar">Φ</sup>8@100/</td><td>2</td><td></td><td></td><td></td><td></td><td>max(1.5*h,500)</td>
                            <td></td><td></td><td></td><td></td>
                        </tr>
                        <tr>
                            <td class="row-no">3</td>
                            <td>3</td><td><sup class="bar">Φ</sup>8@100/</td><td>2</td><td></td><td></td><td></td><td></td><td>max(1.5*h,500)</td>
                            <td></td><td></td><td></td><td></td>
                        </tr>
                    </tbody>
                </table>
                <div class="mark mark-table"></div>
            </section>
        </div>

        <div class="splitter"><div class="grip"></div></div>

        <aside class="display-panel">
            <div class="panel-head"></div>
            <div class="display-title">显示设置</div>
            <div class="display-tabs">
                <span class="d-tab is-active">图元显示</span>
                <span class="d-tab">楼层显示</span>
            </div>
            <div class="layer-head">图层构件</div>
            <ul class="layers">
                <li class="lay l0"><i class="toggle"></i>所有构件</li>
                <li class="lay l1"><i class="toggle"></i>轴线</li>
                <li class="lay l2">轴网</li>
                <li class="lay l2">辅助轴线</li>
                <li class="lay l1"><i class="toggle"></i>柱</li>
                <li class="lay l2">柱</li>
                <li class="lay l2">构造柱</li>
                <li class="lay l2">砌体柱</li>
                <li class="lay l2">约束边缘非阴...</li>
                <li class="lay l1"><i class="toggle"></i>墙</li>
                <li class="lay l2">剪力墙</li>
                <li class="lay l2">人防门框墙</li>
                <li class="lay l2">砌体墙</li>
                <li class="lay l2">砌体加筋</li>
                <li class="lay l2">保温墙</li>
                <li class="lay l2">暗梁</li>
                <li class="lay l2">墙垛</li>
                <li class="lay l2">幕墙</li>
                <li class="lay l1"><i class="toggle"></i>门窗洞</li>
                <li class="lay l2">门</li>
                <li class="lay l2">窗</li>
                <li class="lay l2">门联窗</li>
                <li class="lay l2">墙洞</li>
                <li class="lay l2">带形窗</li>
                <li class="lay l2">带形洞</li>
                <li class="lay l2">飘窗</li>
                <li class="lay l2">老虎窗</li>
                <li class="lay l2">过梁</li>
                <li class="lay l2">壁龛</li>
                <li class="lay l1"><i class="toggle"></i>梁</li>
                <li class="lay l2">梁</li>
                <li class="lay l2">连梁</li>
                <li class="lay l2">圈梁</li>
                <li class="lay l1"><i class="toggle"></i>板</li>
            </ul>
            <div class="side-flag">
                <svg class="flag-icon" viewBox="0 0 12 16"><path d="M4 1v8H1v5h5v-3h5" fill="none" stroke="#2f8ae8" stroke-width="1.500"/></svg>
            </div>
        </aside>
    </div>
</body>
</html>
```

FILE: styles.css
```css
* {
    box-sizing: border-box;
}

html, body {
    margin: 0;
    height: 955px;
    overflow: hidden;
}

body {
    width: 1625px;
    background: #fff;
    color: #222;
    font-family: "Noto Sans", "Noto Sans CJK SC", sans-serif;
    font-size: 12px;
    line-height: 1;
}

ul {
    margin: 0;
    padding: 0;
    list-style: none;
}

.sprite {
    position: absolute;
    width: 0;
    height: 0;
}

.caret {
    display: inline-block;
    width: 0;
    height: 0;
    margin-left: 4px;
    border-left: 3px solid transparent;
    border-right: 3px solid transparent;
    border-top: 3px solid #555;
}

/* menu tabs */
.menu-tabs {
    display: flex;
    height: 6px;
    overflow: hidden;
    border-bottom: 1px solid #d8d8d8;
    font-size: 13px;
    line-height: 1;
}

.menu-tab {
    display: block;
    height: 5px;
    overflow: hidden;
    color: #444;
    line-height: 1px;
    white-space: nowrap;
}

.tab-a { width: 31px; text-align: right; padding-right: 4px; }
.tab-b { width: 50px; text-align: center; color: #fff; background: #5ba4f5; }
.tab-c { margin-left: 14px; width: 48px; }
.tab-d { width: 50px; }
.tab-e { width: 64px; }
.tab-f { width: 60px; }
.tab-g { width: 106px; }
.tab-h { width: 60px; }

.menu-search {
    width: 244px;
    height: 4px;
    margin-left: 861px;
    background: #fff;
    border: 1px solid #c8c8c8;
    border-top: 0;
}

/* ribbon */
.ribbon {
    position: relative;
    display: flex;
    height: 98px;
    padding-left: 3px;
    background: linear-gradient(#fff 45%, #eceeef);
    border-bottom: 2px solid #8d8d8d;
}

.group {
    display: flex;
    flex-direction: column;
    flex: none;
    height: 96px;
    border-right: 1px solid #d4d6d8;
    border-left: 1px solid transparent;
}

.g-cad { width: 194px; border-left-color: #d4d6d8; }
.g-common { width: 275px; }
.g-modify { width: 238px; }
.g-draw { width: 119px; }
.g-identify { width: 249px; }
.g-beam { width: 520px; }

.group-body {
    display: grid;
    grid-template-rows: repeat(3, 23px);
    grid-auto-flow: column;
    height: 73.500px;
    padding-top: 4.500px;
}

.g-cad .group-body { padding-left: 8px; grid-template-columns: 79px 1fr; }
.g-common .group-body { padding-left: 8px; grid-template-columns: 66px 111px 1fr; }
.g-modify .group-body { padding-left: 9px; grid-template-columns: 54px 54px 54px 1fr; }
.g-draw .group-body { padding-left: 8px; grid-template-columns: 32px 51px 1fr; }
.g-identify .group-body { padding-left: 8px; grid-template-columns: 46px 101px 1fr; }
.g-beam .group-body { padding-left: 7px; grid-template-columns: 53px 88px 103px 90px 98px 1fr; }

.group-label {
    display: flex;
    align-items: center;
    justify-content: center;
    height: 22.500px;
    color: #222;
}

.g-identify .group-label {
    padding-top: 4px;
}

.item {
    display: flex;
    align-items: center;
    gap: 3px;
    white-space: nowrap;
}

.item svg {
    flex: none;
    width: 16px;
    height: 16px;
    margin-top: -2px;
}

.item-check {
    margin-left: -3px;
}

.off,
.off-text {
    color: #ababab;
}

.big {
    grid-row: 1 / 4;
    display: flex;
    flex-direction: column;
    align-items: center;
    gap: 8px;
    padding-top: 3px;
    white-space: nowrap;
}

.g-identify .big {
    width: 38px;
}

.draw-icon {
    flex: none;
    width: 30px;
    height: 30px;
}

.smart {
    gap: 7px;
}

.smart .caret {
    margin: -2px 0 0;
}

.g-beam .item.is-on {
    height: 19px;
    margin: 0 5px 0 -2px;
    padding-left: 2px;
    background: #cfe3fb;
    border: 1px solid #8fbcec;
}

.mark {
    position: absolute;
    border: 3px solid #f5333c;
    pointer-events: none;
}

.mark-ribbon {
    left: 1119px;
    top: -1px;
    width: 123px;
    height: 37px;
}

/* selector bar */
.selector-bar {
    display: flex;
    align-items: center;
    height: 27px;
    background: #c9ccce;
    border-bottom: 1px solid #9a9a9a;
}

.select {
    position: relative;
    display: flex;
    align-items: center;
    width: 99px;
    height: 22px;
    margin-right: 3px;
    padding: 2px 0 0 4px;
    background: #fff;
    border: 1px solid #e2e2e2;
}

.select .caret {
    position: absolute;
    right: 5px;
    top: 9px;
}

.sel-first {
    width: 59px;
    margin-right: 4px;
}

.check-label {
    display: flex;
    align-items: center;
    gap: 3px;
    margin-left: 2px;
    padding-top: 2px;
}

.check-box {
    width: 13px;
    height: 13px;
    margin-top: -2px;
}

.note {
    margin-left: 19px;
    padding-top: 2px;
}

/* panels */
.main {
    display: flex;
    height: 824px;
    background: #fff;
}

.panel-head {
    display: flex;
    justify-content: flex-end;
    align-items: center;
    height: 12px;
    padding-right: 6px;
    background: #d3d4d8;
}

.close {
    color: #777;
    font-size: 13px;
    font-family: "Liberation Sans", sans-serif;
    font-weight: bold;
}

.close-x {
    font-weight: normal;
    font-size: 11px;
}

.rail {
    flex: none;
    width: 69px;
    margin-right: 4px;
    border-right: 1px solid #b8b8b8;
}

.rail-tabs {
    height: 21px;
    background: #eee;
    border-bottom: 1px solid #c8c8c8;
}

.rail-tools {
    display: flex;
    justify-content: flex-end;
    gap: 4px;
    height: 31px;
    padding: 3px 1px 0 0;
    background: #eee;
    border-bottom: 1px solid #c8c8c8;
}

.view-btn {
    width: 22px;
    height: 24px;
}

.left-col {
    display: flex;
    flex: none;
    flex-direction: column;
    gap: 4px;
    width: 323px;
}

.panel {
    border: 1px solid #b0b0b0;
    border-top: 0;
    border-bottom: 0;
}

.list-panel {
    flex: none;
    height: 567px;
    border-bottom: 1px solid #b0b0b0;
}

.prop-panel {
    flex: 1;
    min-height: 0;
    overflow: hidden;
}

.tabs {
    display: flex;
    height: 22px;
    background: #eee;
    border-bottom: 1px solid #c8c8c8;
}

.tab {
    display: flex;
    align-items: center;
    justify-content: center;
    width: 65px;
    height: 22px;
    padding-top: 2px;
    color: #888;
    font-weight: 600;
    background: #dcdcdc;
    border-right: 1px solid #c8c8c8;
}

.tab.is-active {
    width: 64px;
    color: #333;
    background: #eee;
}

.list-tools {
    position: relative;
    display: flex;
    align-items: center;
    height: 31px;
    padding: 2px 0 0 5px;
    background: #eee;
    border-bottom: 1px solid #c8c8c8;
}

.tool {
    display: flex;
    align-items: center;
    gap: 3px;
    margin-right: 10px;
    white-space: nowrap;
}

.tool svg {
    width: 16px;
    height: 16px;
    margin-top: -3px;
}

.tool .caret {
    margin-left: 5px;
    margin-right: 1px;
}

.more {
    position: absolute;
    right: 3px;
    top: 11px;
    font-size: 8px;
}

.search {
    display: flex;
    align-items: center;
    justify-content: space-between;
    height: 19px;
    padding: 2px 7px 0 2px;
    color: #888;
    border-bottom: 1px solid #dcdcdc;
}

.search-icon {
    width: 11px;
    height: 11px;
    margin-top: -2px;
}

.tree {
    padding-top: 3px;
}

.node {
    display: flex;
    align-items: center;
    height: 24px;
    padding-top: 1px;
}

.lv0 { padding-left: 7px; }
.lv1 { padding-left: 30px; }
.lv2 { padding-left: 59px; }

.tri {
    display: inline-block;
    width: 0;
    height: 0;
    margin-right: 7px;
    border-left: 6px solid transparent;
    border-bottom: 6px solid #444;
}

.root-mark {
    display: flex;
    align-items: center;
    width: 39px;
    height: 16px;
    padding-left: 2px;
    border: 2px solid #f5333c;
}

.root-mark .tri {
    margin-right: 5px;
}

.leaf {
    display: flex;
    align-items: center;
    height: 21px;
    padding: 1px 4px 0;
}

.is-selected {
    background: #b4cdeb;
}

/* property table */
.prop-body {
    position: relative;
    height: 218px;
    overflow: hidden;
}

.prop-table {
    width: 305px;
    border-collapse: collapse;
    table-layout: fixed;
}

.prop-table th {
    height: 21px;
    padding-top: 2px;
    color: #444;
    font-weight: normal;
    background: #eee;
    border: 1px solid #d0d0d0;
    border-top: 0;
}

.p-idx { width: 22px; }
.p-name { width: 101px; }

.prop-table td {
    height: 21px;
    padding: 2px 3px 0;
    white-space: nowrap;
    border: 1px solid #d0d0d0;
}

.prop-table .idx {
    padding: 2px 0 0;
    color: #444;
    text-align: center;
    background: #f2f2f2;
}

.prop-table .link {
    color: #3a6ee8;
}

.bar {
    display: inline-block;
    font-size: 10px;
    vertical-align: 3px;
    line-height: 1;
    margin: 0 1px 0 2px;
}

.bar-c {
    border-bottom: 1px solid #222;
}

.prop-scroll {
    position: absolute;
    right: 4px;
    top: 0;
    width: 8px;
    height: 100%;
}

.prop-thumb {
    height: 77px;
    margin-top: 14px;
    background: #ccc;
    border-radius: 4px;
}

.splitter {
    flex: none;
    width: 4px;
}

.grip {
    height: 103px;
    margin-top: 221px;
    background: #6b7780;
}

/* canvas */
.center-col {
    position: relative;
    flex: none;
    display: flex;
    flex-direction: column;
    width: 1091px;
}

.canvas {
    position: relative;
    flex: none;
    height: 540px;
    background: #000;
}

.drawing {
    display: block;
    width: 1091px;
    height: 540px;
}

.dim-text text {
    fill: #fff;
    font-family: "Liberation Sans", sans-serif;
    font-size: 18px;
}

.bubble-text text {
    fill: #fff;
    font-family: "Liberation Sans", sans-serif;
    font-size: 17px;
}

.note-text {
    fill: #fff;
    font-family: "Liberation Sans", sans-serif;
    font-size: 8px;
}

.tag-text {
    fill: #fff;
    font-family: "Liberation Sans", sans-serif;
    font-size: 9px;
}

.axis-y {
    fill: #00c800;
    font-family: "Liberation Sans", sans-serif;
    font-size: 11px;
}

.axis-x {
    fill: #e01414;
    font-family: "Liberation Sans", sans-serif;
    font-size: 14px;
}

.view-tools {
    position: absolute;
    right: 0;
    top: 1px;
    display: flex;
    flex-direction: column;
    align-items: center;
    width: 33px;
    height: 225px;
    padding-top: 8px;
    background: #9a9da3;
    border: 1px solid #b8babd;
}

.view-icon {
    flex: none;
    width: 24px;
    height: 24px;
    margin-bottom: 5px;
}

.view-tools .caret {
    flex: none;
    margin: 1px 0 5px;
    border-top: 4px solid #3c4652;
}

.view-sep {
    flex: none;
    width: 24px;
    margin: 2px 0 4px;
    border: 0;
    border-top: 1px solid #666;
}

.h-splitter {
    flex: none;
    height: 5px;
}

.h-grip {
    display: flex;
    justify-content: center;
    width: 100px;
    height: 4px;
    margin-left: 496px;
    background: #6b7780;
}

.h-grip .caret {
    margin: 0;
    border-top-color: #ccc;
}

/* span table */
.table-panel {
    position: relative;
    flex: 1;
    min-height: 0;
    background: #fff;
}

.table-panel .panel-head {
    height: 11px;
}

.table-title {
    display: flex;
    align-items: center;
    height: 26px;
    padding: 0 0 2px 8px;
    color: #888;
    font-weight: 600;
    background: #efefef;
    border-bottom: 1px solid #e2e2e2;
}

.table-tools {
    display: flex;
    align-items: center;
    gap: 10px;
    height: 28px;
    padding: 0 0 2px 5px;
    background: #efefef;
    border-bottom: 1px solid #c8c8c8;
}

.span-table {
    width: 1081px;
    border-collapse: collapse;
    table-layout: fixed;
}

.c-row { width: 7px; }
.c-sm { width: 61px; }
.c-md { width: 81px; }
.c-lg { width: 101px; }

.span-table th {
    height: 35px;
    padding: 3px 0 0;
    overflow: hidden;
    color: #444;
    font-weight: normal;
    white-space: nowrap;
    background: #efefef;
    border: 1px solid #d8d8d8;
    border-top: 0;
}

.span-table th.is-picked {
    color: #fff;
    background: #7eb8f7;
}

.span-table td {
    height: 21px;
    padding: 0 3px;
    overflow: hidden;
    white-space: nowrap;
    border: 1px solid #dedede;
    border-bottom-color: #d0d0d0;
}

.span-table .row-no {
    padding: 0;
    color: #444;
    font-size: 11px;
    background: #f4f4f4;
}

.span-table .is-current {
    color: #fff;
    background: #7eb8f7;
}

.span-table .pos-cell {
    padding: 0 2px 0 5px;
    line-height: 17px;
}

.span-table .cell-edit {
    position: relative;
    border: 1px solid #5ba4f5;
}

.cell-edit .caret {
    position: absolute;
    right: 5px;
    top: 8px;
    margin: 0;
}

.mark-table {
    left: 761px;
    top: 56px;
    width: 176px;
    height: 64px;
}

/* display panel */
.display-panel {
    position: relative;
    flex: 1;
    min-width: 0;
    overflow: hidden;
    padding-left: 1px;
}

.display-panel > .panel-head {
    height: 12px;
    background: #d3d4d8;
}

.display-title {
    display: flex;
    align-items: center;
    height: 25px;
    padding: 0 0 3px 8px;
    color: #888;
    font-weight: 600;
    background: #eee;
}

.display-tabs {
    display: flex;
    gap: 3px;
    height: 25px;
    padding-left: 2px;
    background: #eee;
    border-bottom: 1px solid #c8c8c8;
}

.d-tab {
    display: flex;
    align-items: center;
    justify-content: center;
    flex: none;
    width: 76px;
    color: #777;
    white-space: nowrap;
    background: #e2e2e2;
    border-radius: 3px 3px 0 0;
}

.d-tab.is-active {
    height: 25px;
    color: #2f8ae8;
    background: #fff;
    border: 1px solid #c8c8c8;
    border-bottom: 0;
}

.layer-head {
    display: flex;
    align-items: center;
    justify-content: center;
    height: 21px;
    width: 140px;
    margin: 3px 0 0 2px;
    color: #444;
    background: #eee;
    border: 1px solid #d0d0d0;
}

.layers {
    margin-left: 2px;
    border-left: 1px solid #d0d0d0;
}

.lay {
    position: relative;
    display: flex;
    align-items: center;
    height: 21px;
    padding-top: 2px;
    white-space: nowrap;
    border-bottom: 1px solid #dcdcdc;
}

.l0 { padding-left: 22px; }
.l1 { padding-left: 32px; }
.l2 { padding-left: 42px; }

.toggle {
    position: absolute;
    top: 4px;
    width: 12px;
    height: 12px;
    border: 1px solid #999;
    border-radius: 2px;
    background: linear-gradient(#555, #555) center / 6px 1px no-repeat #fff;
}

.l0 .toggle { left: 3px; }
.l1 .toggle { left: 13px; }

.l2::before {
    content: "";
    position: absolute;
    left: 18px;
    top: -1px;
    width: 16px;
    height: 11px;
    border-left: 1px solid #ccc;
    border-bottom: 1px solid #ccc;
}

.side-flag {
    position: absolute;
    right: 0;
    top: 393px;
    width: 12px;
    height: 32px;
    padding: 8px 0 0 2px;
    background: #c9ebc9;
    border: 1px solid #6bb8f0;
    border-right: 0;
    border-radius: 4px 0 0 4px;
}

.flag-icon {
    display: block;
    width: 10px;
    height: 14px;
}
```
